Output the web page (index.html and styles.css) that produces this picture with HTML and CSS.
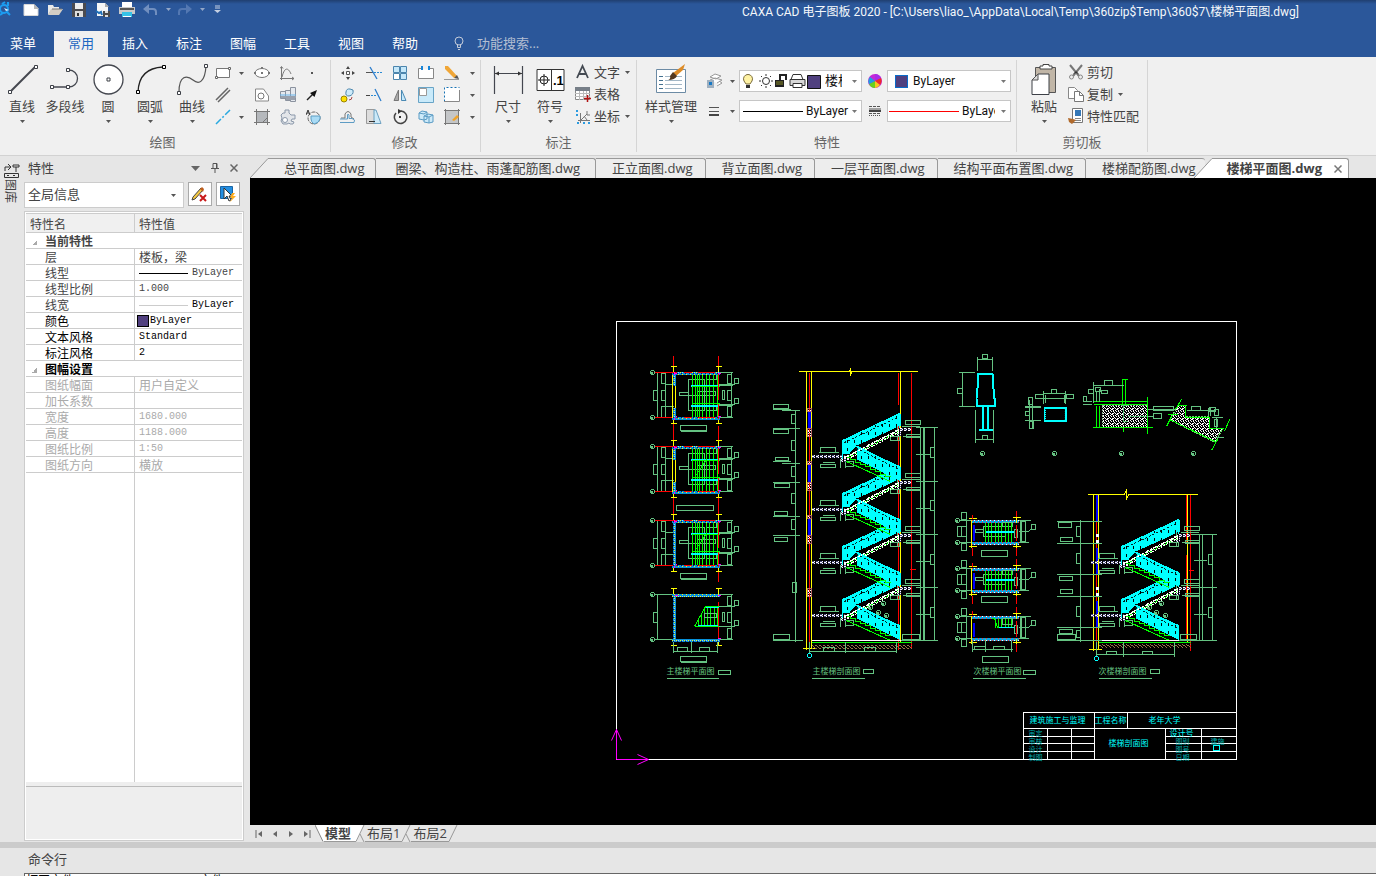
FILE: index.html
```html
<!DOCTYPE html>
<html lang="zh-CN">
<head>
<meta charset="utf-8">
<title>CAXA CAD 电子图板 2020</title>
<link rel="stylesheet" href="styles.css">
</head>
<body>
<svg class="defs" aria-hidden="true">
  <symbol id="caret" viewBox="0 0 5 3"><path d="M0 0h5L2.500 3z" fill="currentColor"/></symbol>
</svg>
<div class="app">
<header class="top">
  <div class="titlebar">
    <div class="quick">
      <button class="q logo" aria-label="应用"><svg width="16" height="18" viewBox="0 0 16 18"><g fill="none" stroke="#1c9cf0" stroke-width="2"><circle cx="4" cy="8" r="4"/><path d="M7 11l3 3M2 3l3-2M8 5V1M0 14l3-2"/></g><path d="M4 7l5 2-3 1z" fill="#d5ecff"/></svg></button>
      <button class="q" aria-label="新建"><svg width="16" height="18" viewBox="0 0 16 18"><path d="M1 3.500h10l4 4v7H1z" fill="#fff" stroke="#d8d8d8"/><path d="M11 3v5h5z" fill="#b7b7b7"/></svg></button>
      <button class="q" aria-label="打开"><svg width="16" height="18" viewBox="0 0 16 18"><path d="M1 14V4h5l1 2h5v2H5z" fill="#e9e9e9"/><path d="M4 8h12l-4 6H1z" fill="#d3cdc4"/><path d="M5 8h10" stroke="#777"/></svg></button>
      <button class="q" aria-label="保存"><svg width="14" height="18" viewBox="0 0 14 18"><path d="M0 2h14v14H0z" fill="#4b4b50"/><path d="M3 2h8v6H3z" fill="#eee"/><path d="M3 10h8v6H3z" fill="#ddd"/><path d="M5 12h2v3H5z" fill="#333"/></svg></button>
      <button class="q" aria-label="另存为"><svg width="16" height="18" viewBox="0 0 16 18"><path d="M2 2h8l3 3v10H2z" fill="#f6f6f6"/><path d="M10 2v4h4z" fill="#aaa"/><path d="M1 10l3 2 2-1 1 3" stroke="#2170b8" fill="none" stroke-width="2"/><path d="M8 10h7v6H8z" fill="#4a4a4d"/><path d="M10 10h3v2h-3zM10 14h3v2h-3z" fill="#ddd"/></svg></button>
      <button class="q" aria-label="打印"><svg width="16" height="18" viewBox="0 0 16 18"><path d="M3 1h10v6H3z" fill="#fff"/><path d="M0 6h16v7H0z" fill="#c9c9c9"/><path d="M1 7h14v2H1z" fill="#555"/><path d="M3 11h10v5H3z" fill="#35c2e8"/><path d="M4 15h8v1H4z" fill="#fff"/></svg></button>
      <button class="q" aria-label="撤销"><svg width="16" height="18" viewBox="0 0 16 18"><path d="M4 8h6q3 0 3 3v3" fill="none" stroke="#718fbf" stroke-width="2"/><path d="M6 3v10L0 8z" fill="#718fbf"/></svg></button>
      <button class="q drop" aria-label="撤销列表"><svg class="caret"><use href="#caret"/></svg></button>
      <button class="q" aria-label="重做"><svg width="16" height="18" viewBox="0 0 16 18"><path d="M10 8H5q-3 0-3 3v3" fill="none" stroke="#5478b2" stroke-width="2"/><path d="M9 3v10l6-5z" fill="#5478b2"/></svg></button>
      <button class="q drop" aria-label="重做列表"><svg class="caret"><use href="#caret"/></svg></button>
      <button class="q more" aria-label="自定义"><svg width="7" height="9" viewBox="0 0 7 9"><path d="M1 1h5M1 3h5" stroke="#c5d0e2"/><path d="M0 5h7L3.500 8z" fill="#c5d0e2"/></svg></button>
    </div>
    <div class="title">CAXA CAD 电子图板 2020 - [C:\Users\liao_\AppData\Local\Temp\360zip$Temp\360$7\楼梯平面图.dwg]</div>
  </div>
  <nav class="menu">
    <button class="mtab first">菜单</button><button class="mtab on">常用</button><button class="mtab">插入</button><button class="mtab">标注</button><button class="mtab">图幅</button><button class="mtab">工具</button><button class="mtab">视图</button><button class="mtab">帮助</button>
    <label class="search"><svg width="10" height="14" viewBox="0 0 10 14"><g fill="none" stroke="#c3cbd9"><circle cx="5" cy="5" r="4"/><path d="M3.500 8.500v3h3v-3M4 13.500h2"/></g></svg><input type="text" placeholder="功能搜索..." aria-label="功能搜索"></label>
  </nav>
</header>

<section class="ribbon">
  <div class="group g-draw">
    <div class="tools">
      <button class="big"><svg width="32" height="32" viewBox="0 0 32 32"><path d="M4 29L29 4" stroke="#44474f" stroke-width="2"/><g fill="#fff" stroke="#3d4047"><path d="M2.500 27.500h3v3h-3zM28.500 2.500h3v3h-3z"/></g></svg><span>直线</span><svg class="caret"><use href="#caret"/></svg></button>
      <button class="big"><svg width="32" height="32" viewBox="0 0 32 32"><path d="M3 24h17a8.500 8.500 0 0 0 0-17" fill="none" stroke="#44474f" stroke-width="1.300"/><g fill="#fff" stroke="#3d4047"><path d="M1.500 22.500h3v3h-3zM17.500 22.500h3v3h-3zM17.500 5.500h3v3h-3z"/></g></svg><span>多段线</span></button>
      <button class="big"><svg width="32" height="32" viewBox="0 0 32 32"><circle cx="16.500" cy="16.500" r="14.500" fill="#fff" stroke="#44474f" stroke-width="1.300"/><path d="M15 15h3v3h-3z" fill="#fff" stroke="#3d4047"/></svg><span>圆</span><svg class="caret"><use href="#caret"/></svg></button>
      <button class="big"><svg width="32" height="32" viewBox="0 0 32 32"><path d="M4 29Q5 5 29 4" fill="none" stroke="#222" stroke-width="1.300"/><g fill="#fff" stroke="#000"><path d="M2.500 27.500h3v3h-3zM28.500 2.500h3v3h-3z"/></g></svg><span>圆弧</span><svg class="caret"><use href="#caret"/></svg></button>
      <button class="big"><svg width="32" height="32" viewBox="0 0 32 32"><path d="M3 29C3 12 11 12 17 17s12 2 13-14" fill="none" stroke="#555" stroke-width="1.200"/><g fill="#fff" stroke="#3d4047"><path d="M1.500 28.500h3v3h-3zM28.500 1.500h3v3h-3z"/></g></svg><span>曲线</span><svg class="caret"><use href="#caret"/></svg></button>
      <div class="minis">
        <button class="mini wide" aria-label="矩形"><svg width="16" height="16" viewBox="0 0 16 16"><path d="M1.500 3.500h13v9h-13z" fill="#fff" stroke="#777"/><path d="M.5 11.500h2v2h-2zM13.500 2.500h2v2h-2z" fill="#fff" stroke="#666"/></svg><svg class="caret"><use href="#caret"/></svg></button>
        <button class="mini" aria-label="椭圆"><svg width="16" height="16" viewBox="0 0 16 16"><ellipse cx="8" cy="8" rx="7" ry="4.500" fill="#fff" stroke="#777"/><path d="M7 7h2v2H7zM0 7h2v2H0zM14 7h2v2h-2zM7 2h2v2H7z" fill="#777"/></svg></button>
        <button class="mini" aria-label="函数曲线"><svg width="16" height="16" viewBox="0 0 16 16"><path d="M1.500 2v13M0 13.500h14M0 3.500l1.500-2 1.500 2M12 12l2 1.500L12 15M2 12C5 0 9 4 11 9" fill="none" stroke="#777"/></svg></button>
        <button class="mini" aria-label="点"><svg width="16" height="16" viewBox="0 0 16 16"><path d="M5 7h2v2H5z" fill="#555"/></svg></button>
        <button class="mini wide" aria-label="平行线"><svg width="16" height="16" viewBox="0 0 16 16"><path d="M1 13L13 1M3 15L15 3" stroke="#666" stroke-width="1.500"/></svg></button>
        <button class="mini" aria-label="轮廓"><svg width="16" height="16" viewBox="0 0 16 16"><path d="M1.500 2h8l5 7v5h-13z" fill="#fff" stroke="#888"/><circle cx="7" cy="9" r="3" fill="none" stroke="#777"/></svg></button>
        <button class="mini" aria-label="孔轴"><svg width="16" height="16" viewBox="0 0 16 16"><path d="M.5 4.500h5v7h-5zM5.500 3.500h5v10h-5zM10.500.5h5v14h-5z" fill="#e4e8ee" stroke="#8b929e"/><path d="M0 8h16" stroke="#69b4ea"/><path d="M1 10h15M6 12h9" stroke="#9aa1ad" stroke-width="2"/></svg></button>
        <button class="mini" aria-label="箭头"><svg width="16" height="16" viewBox="0 0 16 16"><path d="M1 13l7-7" stroke="#222" stroke-width="1.500"/><path d="M11 3L8.500 10 4 6z" fill="#111"/></svg></button>
        <button class="mini wide" aria-label="中心线"><svg width="16" height="16" viewBox="0 0 16 16"><path d="M1 15L15 1" stroke="#29a9e0" stroke-width="1.500" stroke-dasharray="7 2 2 2"/></svg><svg class="caret"><use href="#caret"/></svg></button>
        <button class="mini" aria-label="剖面线"><svg width="16" height="16" viewBox="0 0 16 16"><path d="M2 2h12v12H2z" fill="#b5b8bc"/><path d="M0 2.500h16M0 13.500h16M2.500 0v16M13.500 0v16M9 13l4-4" stroke="#777"/></svg></button>
        <button class="mini" aria-label="齿轮"><svg width="16" height="16" viewBox="0 0 16 16"><path d="M5 4V1h4v3l2 2h4v4h-3l-1 2 3 1-1 2h-3l-1-1-2 1H3l-2-3 1-3-1-3 2-2z" fill="#e2e5e9" stroke="#8b98aa"/><circle cx="5" cy="11" r="2.500" fill="#fff" stroke="#8b98aa"/></svg></button>
        <button class="mini" aria-label="局部放大"><svg width="16" height="16" viewBox="0 0 16 16"><circle cx="8" cy="9" r="6" fill="none" stroke="#666" stroke-dasharray="4 1"/><path d="M5 7h9v3q-1 4-6 5-3-2-3-5z" fill="#a9dbf5" stroke="#5c9ec4"/><path d="M0 6l2-5 2 5M1 4h2" fill="none" stroke="#333"/></svg></button>
      </div>
    </div>
    <div class="gname">绘图</div>
  </div>

  <div class="group g-edit">
    <div class="tools">
      <div class="minis six">
        <button class="mini" aria-label="平移"><svg width="16" height="16" viewBox="0 0 16 16"><path d="M8 1l2 3H6zM8 15l2-3H6zM1 8l3-2v4zM15 8l-3-2v4z" fill="#444"/><path d="M6.500 6.500h3v3h-3z" fill="#fff" stroke="#555"/></svg></button>
        <button class="mini" aria-label="裁剪"><svg width="16" height="16" viewBox="0 0 16 16"><path d="M0 7.500h7" stroke="#555"/><path d="M8 7.500h8" stroke="#2c8bd4" stroke-dasharray="2 1"/><path d="M4 2l7 12" stroke="#2c7dcc" stroke-width="1.300"/></svg></button>
        <button class="mini" aria-label="阵列"><svg width="16" height="16" viewBox="0 0 16 16"><g fill="#c5e8fa" stroke="#4b85ad"><path d="M1.500 1.500h6v6h-6zM8.500 1.500h6v6h-6zM8.500 8.500h6v6h-6z"/><path d="M1.500 8.500h6v6h-6z" fill="#fff"/></g></svg></button>
        <button class="mini" aria-label="打断"><svg width="16" height="16" viewBox="0 0 16 16"><path d="M.5 3.500h15v10H.5z" fill="#fff" stroke="#888"/><path d="M5 3h6" stroke="#f0f0f0" stroke-width="3"/><path d="M4 1v4M11 1v4" stroke="#1885d8" stroke-width="2"/></svg></button>
        <button class="mini" aria-label="删除"><svg width="16" height="16" viewBox="0 0 16 16"><path d="M1 1l3 0 9 10-3 2L1 4z" fill="#f0a637"/><path d="M13 10l2 4-5-1z" fill="#555"/><path d="M0 14.500h15" stroke="#999"/></svg></button>
        <button class="mini arr" aria-label="更多删除"><svg class="caret"><use href="#caret"/></svg></button>
        <button class="mini" aria-label="复制对象"><svg width="16" height="16" viewBox="0 0 16 16"><circle cx="4" cy="12" r="3" fill="#ffe000" stroke="#998400"/><path d="M6 5a3.500 3.500 0 0 1 4-3l3 1q1 5-4 6-4 0-3-4z" fill="#cdeaf9" stroke="#4c87ae"/><path d="M9 13q3 0 3-3" fill="none" stroke="#a54444"/></svg></button>
        <button class="mini" aria-label="延伸"><svg width="16" height="16" viewBox="0 0 16 16"><path d="M0 8.500h4" stroke="#444"/><path d="M5 8.500h6" stroke="#2c8bd4" stroke-dasharray="2 1"/><path d="M9 2l6 12" stroke="#2c7dcc" stroke-width="1.300"/></svg></button>
        <button class="mini" aria-label="镜像"><svg width="16" height="16" viewBox="0 0 16 16"><path d="M6.500 3v10.500H2z" fill="#aaa" stroke="#777"/><path d="M9.500 3v10.500H14z" fill="#c5e8fa" stroke="#4a89b3"/></svg></button>
        <button class="mini" aria-label="缩放"><svg width="16" height="16" viewBox="0 0 16 16"><path d="M.5.5h15v15H.5z" fill="#c9eafa" stroke="#68a4c7"/><path d="M1.500 1.500h7v7h-7z" fill="#fff" stroke="#999"/></svg></button>
        <button class="mini" aria-label="拉伸"><svg width="16" height="16" viewBox="0 0 16 16"><path d="M.5.5h15v14H.5z" fill="#fff"/><path d="M.5 14.500V.5h15" fill="none" stroke="#1672b5" stroke-dasharray="2 2"/><path d="M0 14.500h15.500V3" fill="none" stroke="#888"/></svg></button>
        <button class="mini arr" aria-label="更多拉伸"><svg class="caret"><use href="#caret"/></svg></button>
        <button class="mini" aria-label="等距线"><svg width="16" height="16" viewBox="0 0 16 16"><path d="M1 9h4V5q3-5 6 0v3l3 2" fill="none" stroke="#777"/><path d="M0 13.500h14q2-3-2-4H9V6Q8 4 7.500 6v4H0" fill="none" stroke="#5e9cc4"/></svg></button>
        <button class="mini" aria-label="过渡"><svg width="16" height="16" viewBox="0 0 16 16"><path d="M.5.5h8v14h-8z" fill="#ddd" stroke="#999"/><path d="M8 1h2l5 13.500H8z" fill="#cdeaf9" stroke="#6da1c1"/><path d="M3 12.500h6" stroke="#333"/></svg></button>
        <button class="mini" aria-label="旋转"><svg width="16" height="16" viewBox="0 0 16 16"><path d="M9 2a6.200 6.200 0 1 1-5 2" fill="none" stroke="#444" stroke-width="1.500"/><path d="M6 0v5l4-3z" fill="#333"/><path d="M7 7h2v2H7z" fill="#333"/></svg></button>
        <button class="mini" aria-label="块"><svg width="16" height="16" viewBox="0 0 16 16"><g fill="#cdeaf9" stroke="#5a9bc4"><path d="M1 4l3-2 5 1v7l-3 1-5-1zM6 7l4-2 5 1v7l-4 1-5-1z"/><path d="M6 7l5 1 4-2M11 8v6M1 4l5 1 3-2" fill="none"/></g></svg></button>
        <button class="mini" aria-label="编辑剖面"><svg width="16" height="16" viewBox="0 0 16 16"><path d="M2 2h12v12H2z" fill="#c4c6c8"/><path d="M0 1.500h16M0 14.500h16M1.500 0v16M14.500 0v16" stroke="#777"/><path d="M8 11l5-5 2 2-5 4z" fill="#efa32b"/></svg></button>
        <button class="mini arr" aria-label="更多编辑"><svg class="caret"><use href="#caret"/></svg></button>
      </div>
    </div>
    <div class="gname">修改</div>
  </div>

  <div class="group g-note">
    <div class="tools">
      <button class="big"><svg width="32" height="32" viewBox="0 0 32 32"><path d="M2.500 3v28M30.500 3v28M3 10.500h27" stroke="#44474f" stroke-width="1.200"/><path d="M3 10.500l4-2v4zM30 10.500l-4-2v4z" fill="#333"/></svg><span>尺寸</span><svg class="caret"><use href="#caret"/></svg></button>
      <button class="big"><svg width="32" height="32" viewBox="0 0 32 32"><path d="M3 6.500h27v21H3zM17.500 6v22" fill="#fff" stroke="#333"/><circle cx="10" cy="17" r="4" fill="none" stroke="#222"/><path d="M4 17h12M10 11v12" stroke="#222"/><text x="19" y="22" font-family="Liberation Sans" font-size="13" font-weight="700">.1</text></svg><span>符号</span><svg class="caret"><use href="#caret"/></svg></button>
      <div class="rows">
        <button class="row"><svg width="16" height="16" viewBox="0 0 16 16"><path d="M2 14L7.500 2 13 14M4 10h7" fill="none" stroke="#444a52" stroke-width="1.800"/></svg>文字<svg class="caret"><use href="#caret"/></svg></button>
        <button class="row"><svg width="16" height="16" viewBox="0 0 16 16"><path d="M.5 1.500h14v12H.5z" fill="#fff" stroke="#888"/><path d="M0 1h15v4H0z" fill="#777f88"/><path d="M0 7.500h15M0 10.500h15M4.500 5v9M8.500 5v9M11.500 5v5" stroke="#bbb"/><path d="M12.500 9v7M9 12.500h7" stroke="#b31313" stroke-width="1.500"/></svg>表格</button>
        <button class="row"><svg width="16" height="16" viewBox="0 0 16 16"><path d="M5.500 5v10M3 12.500h12M6 12l6-6M12 3v4h3M9 8l3 4" fill="none" stroke="#777"/><path d="M1 3h2M1 7h2M2 15h2M8 15h2M13 15h2" stroke="#2b9be0" stroke-width="2"/></svg>坐标<svg class="caret"><use href="#caret"/></svg></button>
      </div>
    </div>
    <div class="gname">标注</div>
  </div>

  <div class="group g-prop">
    <div class="tools">
      <button class="big style"><svg width="32" height="32" viewBox="0 0 32 32"><path d="M1.500 6.500h29v23h-29z" fill="#fff" stroke="#6c8ba5"/><path d="M4 13.500h4M4 17.500h4M4 21.500h4M4 25.500h4" stroke="#44718f"/><path d="M10 13.500h17M10 17.500h17M10 21.500h17M10 25.500h17" stroke="#a3b7c6"/><path d="M30 1l-2 6-7 6-3-3z" fill="#dd8b26"/><path d="M18 9l4 4q-2 4-9 4 3-1 2-4z" fill="#54381f"/></svg><span>样式管理</span><svg class="caret"><use href="#caret"/></svg></button>
      <div class="props">
        <button class="pick" aria-label="图层"><svg width="16" height="16" viewBox="0 0 16 16"><path d="M4 4l5-3 6 2-5 3zM4 7l5-2 7 2-5 3M11 13l5-3-3-2" fill="#fff" stroke="#999"/><path d="M1 7h7v8H1z" fill="#9fb0c0"/><path d="M3 9h3v3H3z" fill="#1779c5"/></svg><svg class="caret"><use href="#caret"/></svg></button>
        <div class="combo layer"><svg width="80" height="18" viewBox="0 0 80 18"><path d="M3 9a4.500 4.500 0 1 1 8 0L9 12H5z" fill="#fff3a5" stroke="#7a6b3b"/><path d="M5 13h4v3H5z" fill="#333"/><circle cx="25" cy="9" r="3.500" fill="#fff" stroke="#333"/><path d="M25 2v2M25 14v2M18 9h2M30 9h2M20 4l1 1M29 13l1 1M30 4l-1 1M20 14l1-1" stroke="#333"/><path d="M34 8h9v7h-9z" fill="#222"/><path d="M39 8V3h6v5" fill="none" stroke="#222" stroke-width="2"/><path d="M35 10h7M35 12h7" stroke="#8b8b28"/><path d="M52 2.500h8l2 5H50z" fill="#fff" stroke="#333"/><path d="M49 7.500h15v6H49z" fill="#d8d8d8" stroke="#333"/><path d="M52 11.500h9v4h-9z" fill="#fff" stroke="#333"/><path d="M66.500 3.500h13v13h-13z" fill="#50407f" stroke="#111"/></svg><select aria-label="当前图层"><option>楼板，梁</option></select><svg class="caret"><use href="#caret"/></svg></div>
        <button class="pick one" aria-label="颜色"><svg width="14" height="14" viewBox="0 0 14 14"><circle cx="7" cy="7" r="7" fill="#c528d7"/><path d="M7 7V0a7 7 0 0 1 6 4z" fill="#a92be8"/><path d="M7 7l6-3a7 7 0 0 1-1 7z" fill="#f02a2a"/><path d="M7 7l5 4a7 7 0 0 1-5 3z" fill="#f7c91b"/><path d="M7 7v7a7 7 0 0 1-6-4z" fill="#68d21d"/><path d="M7 7l-6 3a7 7 0 0 1 1-7z" fill="#1c9fe3"/></svg></button>
        <div class="combo"><i class="sw"></i><select aria-label="当前颜色"><option>ByLayer</option></select><svg class="caret"><use href="#caret"/></svg></div>
        <button class="pick" aria-label="线宽"><svg width="16" height="16" viewBox="0 0 16 16"><path d="M3 4.500h10M3 8.500h10" stroke="#555"/><path d="M3 12h10" stroke="#444" stroke-width="2"/></svg><svg class="caret"><use href="#caret"/></svg></button>
        <div class="combo"><i class="ln black"></i><select aria-label="当前线宽"><option>ByLayer</option></select><svg class="caret"><use href="#caret"/></svg></div>
        <button class="pick one" aria-label="线型"><svg width="12" height="12" viewBox="0 0 12 12"><path d="M0 1.500h12M0 8.500h12" stroke="#555" stroke-dasharray="3 1"/><path d="M0 4h12" stroke="#555"/><path d="M0 6h12" stroke="#444" stroke-width="2"/><path d="M0 10.500h12" stroke="#555" stroke-dasharray="1 1"/></svg></button>
        <div class="combo line"><i class="ln red"></i><select aria-label="当前线型"><option>ByLayer</option></select><svg class="caret"><use href="#caret"/></svg></div>
      </div>
    </div>
    <div class="gname">特性</div>
  </div>

  <div class="group g-clip">
    <div class="tools">
      <button class="big"><svg width="32" height="32" viewBox="0 0 32 32"><path d="M7.500 4.500h20v25h-20z" fill="#c1b6a7" stroke="#555"/><path d="M12 6V3h3V1.500h6V3h3v3z" fill="#fff" stroke="#444"/><path d="M4 17l6-6h11v20.500H4z" fill="#fff" stroke="#3d4047"/><path d="M4 17h6v-6z" fill="#ddd" stroke="#555"/></svg><span>粘贴</span><svg class="caret"><use href="#caret"/></svg></button>
      <div class="rows">
        <button class="row"><svg width="16" height="16" viewBox="0 0 16 16"><path d="M2 1l9 11M14 1L5 12" stroke="#777" stroke-width="2"/><path d="M8 7l3 3-3-1-3 1z" fill="#333"/><g fill="#eee" stroke="#888"><circle cx="3.500" cy="13" r="2"/><circle cx="12.500" cy="13" r="2"/></g></svg>剪切</button>
        <button class="row"><svg width="16" height="16" viewBox="0 0 16 16"><path d="M.5 1.500h6l3 3v8h-9z" fill="#fff" stroke="#888"/><path d="M6.500 5.500h5l4 4v6h-9z" fill="#fff" stroke="#777"/><path d="M11.500 5.500v4h4" fill="none" stroke="#777"/></svg>复制<svg class="caret"><use href="#caret"/></svg></button>
        <button class="row"><svg width="16" height="16" viewBox="0 0 16 16"><path d="M4.500.5h10v14h-10z" fill="#fff" stroke="#777"/><path d="M7 2h6v6H7z" fill="#3578b8"/><path d="M7 10.500h6M7 12.500h6" stroke="#888"/><path d="M0 10l5 1 3 1-4 4-3-2z" fill="#b16a2c"/></svg>特性匹配</button>
      </div>
    </div>
    <div class="gname">剪切板</div>
  </div>
</section>

<main class="work">
  <aside class="dock"><svg width="16" height="16" viewBox="0 0 16 16"><path d="M1 8V4h5M4 1l3 3-3 3M9 2h6v2H9zM12 4v5" fill="none" stroke="#333"/><path d="M.5 10.500h14v4H.5zM3 12.500h2M9 12.500h2" fill="none" stroke="#333"/></svg><span>图库</span></aside>
  <section class="left">
    <div class="phead"><span>特性</span><button aria-label="选项"><svg width="9" height="5"><path d="M0 0h9L4.500 5z" fill="#666"/></svg></button><button aria-label="固定"><svg width="8" height="10" viewBox="0 0 8 10"><path d="M2 .5h4v5H2zM5.500 1v4M0 5.500h8M4 6v4" fill="none" stroke="#555"/></svg></button><button aria-label="关闭"><svg width="8" height="8"><path d="M.5.5l7 7M7.500.5l-7 7" stroke="#666" stroke-width="1.500"/></svg></button></div>
    <div class="pbar">
      <div class="scope"><select aria-label="对象范围"><option>全局信息</option></select><svg class="caret"><use href="#caret"/></svg></div>
      <button aria-label="清除选择"><svg width="18" height="18" viewBox="0 0 18 18"><path d="M2 12L10 3l2 2-8 9-3 1z" fill="#f4c842" stroke="#444"/><path d="M9 4l3 3 1-3-2-2z" fill="#be5d1d"/><path d="M9 10l6 6M15 10l-6 6" stroke="#c81919" stroke-width="2"/></svg></button>
      <button aria-label="快速选择"><svg width="18" height="18" viewBox="0 0 18 18"><path d="M1.500 1.500h12v12h-12z" fill="#238fe2" stroke="#1c65a3"/><path d="M5 3v11l3-3 2 5 2-1-2-4h3z" fill="#fff" stroke="#333"/><path d="M13 8l-2 5h2l-2 4 6-6h-3l2-3z" fill="#ffad1f"/></svg></button>
    </div>
    <div class="grid">
      <table>
        <thead><tr><th>特性名</th><th>特性值</th></tr></thead>
        <tbody>
          <tr class="sec"><td colspan="2">当前特性</td></tr>
          <tr><td>层</td><td class="cjk">楼板，梁</td></tr>
          <tr><td>线型</td><td><span class="lv"><i></i>ByLayer</span></td></tr>
          <tr><td>线型比例</td><td>1.000</td></tr>
          <tr><td>线宽</td><td class="dark"><span class="lv thin"><i></i>ByLayer</span></td></tr>
          <tr class="dark"><td>颜色</td><td><span class="cv"><i></i>ByLayer</span></td></tr>
          <tr class="dark"><td>文本风格</td><td>Standard</td></tr>
          <tr class="dark"><td>标注风格</td><td>2</td></tr>
          <tr class="sec dark"><td colspan="2">图幅设置</td></tr>
          <tr class="dim"><td>图纸幅面</td><td class="cjk">用户自定义</td></tr>
          <tr class="dim"><td>加长系数</td><td></td></tr>
          <tr class="dim"><td>宽度</td><td>1680.000</td></tr>
          <tr class="dim"><td>高度</td><td>1188.000</td></tr>
          <tr class="dim"><td>图纸比例</td><td>1:50</td></tr>
          <tr class="dim"><td>图纸方向</td><td class="cjk">横放</td></tr>
        </tbody>
      </table>
      <div class="fill"></div>
      <div class="hint"></div>
    </div>
  </section>
  <section class="docs">
    <div class="dtabs">
      <svg class="lead" width="20" height="22" viewBox="0 0 20 22"><path d="M0 22L18 2.500h2V22z" fill="#ededed"/><path d="M0 22L18 2.500h2" fill="none" stroke="#999"/></svg>
      <button class="dt one">总平面图.dwg</button><button class="dt two">圈梁、构造柱、雨蓬配筋图.dwg</button><button class="dt">正立面图.dwg</button><button class="dt">背立面图.dwg</button><button class="dt">一层平面图.dwg</button><button class="dt">结构平面布置图.dwg</button><button class="dt last">楼梯配筋图.dwg</button>
      <svg class="slant" width="20" height="22" viewBox="0 0 20 22"><path d="M0 22L18 2.500h2V22z" fill="#fff"/><path d="M0 22L18 2.500h2" fill="none" stroke="#999"/></svg>
      <div class="dt on"><button>楼梯平面图.dwg</button><button aria-label="关闭文档"><svg width="8" height="8"><path d="M.5.5l7 7M7.500.5l-7 7" stroke="#777" stroke-width="1.500"/></svg></button></div>
    </div>
    <div class="canvas">
      <svg class="drawing" role="img" aria-label="楼梯平面图">
        <defs>
          <pattern id="wall" width="4" height="4" patternUnits="userSpaceOnUse" patternTransform="translate(-.5 -.5)"><path d="M0 0h4v4H0z" fill="#0790d8"/><path d="M0 0h1v1H0zM2 2h1v1H2z" fill="#ff0"/><path d="M2 0h1v1H2z" fill="#9ad4ff"/><path d="M1 1h1v1H1z" fill="#115"/></pattern>
          <pattern id="wallr" width="4" height="4" patternUnits="userSpaceOnUse" patternTransform="translate(-.5 -.5)"><path d="M0 0h4v4H0z" fill="#08a4e0"/><path d="M0 0h1v1H0zM2 2h1v1H2z" fill="#f33"/><path d="M2 0h1v1H2z" fill="#fff"/></pattern>
          <pattern id="slab" width="4" height="2" patternUnits="userSpaceOnUse" patternTransform="translate(-.5 -.5)"><path d="M0 0h2v1H0zM2 1h1v1H2z" fill="#fff"/><path d="M2 0h1v1H2zM0 1h2v1H0z" fill="#447"/></pattern>
          <pattern id="hatch" width="5" height="5" patternUnits="userSpaceOnUse" patternTransform="translate(-.5 -.5)"><path d="M0 0h1v1H0zM1 1h1v1H1zM3 0h1v2H3zM2 3h2v1H2zM4 2h1v1H4zM0 3h1v1H0zM1 4h2v1H1z" fill="#fff"/></pattern>
          <pattern id="soil" width="4" height="3" patternUnits="userSpaceOnUse" patternTransform="translate(-.5 -.5)"><path d="M0 0h1v1H0zM1 1h1v1H1zM2 2h1v1H2zM3 0h1v1H3z" fill="#967048"/></pattern>
          <pattern id="rail" width="7" height="8" patternUnits="userSpaceOnUse" patternTransform="translate(-.5 -.5)"><path d="M0 0h7v8H0z" fill="#0ff"/><path d="M0 0h1v3H0z" fill="#000"/></pattern>
          <g id="circ"><circle r="2"/><path d="M-1-1v3M0-1v3"/></g>
          <g id="flight">
            <g class="g"><path d="M820 447h15v5h-15zM820 464h15v3h-15zM845 461h8v5h-8zM840 458v9M845 458v9M818 452h20M822 462h12M890 436h9v4h-9zM905 420h15v4h-15zM906 434h14v3h-14zM902 436h18M897 426v14M901 426h18"/></g>
            <path d="M810 454h34v3h-34zM840 456h5v5h-5zM898 427h13v3h-13zM896 429h4v6h-4z" fill="url(#slab)" stroke="none"/>
            <path class="lime" d="M848 455h4v-2h5v-3h5v-2h5v-3h5v-2h5v-3h5v-2h5v-3h5v-2h5v-3"/>
            <path d="M844 457l54-28v3l-51 27z" fill="url(#hatch)" stroke="#fff" stroke-dasharray="2 1"/>
            <path d="M842 440l58-27v12l-19 9-25 11-7 8h-7z" fill="url(#rail)" stroke="none"/>
            <path d="M842 458v-18l57-27v14" stroke="#0ff"/>
            <path d="M844 442l55-26" stroke="#022" stroke-dasharray="2 2"/>
            <path class="lime" d="M846 457h4v2h5v3h5v2h5v2h5v3h5v2h5v3h5v2h7M846 461l44 20"/>
            <path d="M856 445l43 21v14l-43-21z" fill="url(#rail)" stroke="none"/>
            <path d="M853 445l46 21v14" stroke="#0ff"/>
            <path d="M856 448l43 21" stroke="#022" stroke-dasharray="2 2"/>
            <path d="M844 457l24-12" stroke="#fff" stroke-dasharray="2 1"/>
          </g>
          <g id="plandim">
            <g class="g"><use href="#circ" x="652" y="372"/><use href="#circ" x="652" y="417"/><path d="M654 372h19M654 417h19M657 372v45M653 390h4v10h-4zM718 372h14M718 417h14M731 372v45M727 374h4v9h-4zM727 390h4v10h-4zM727 406h4v10h-4zM722 390h2v9h-2zM734 378h4v5h-4zM734 398h4v5h-4zM718 384h16l3-2M718 404h16l3-2"/></g>
            <path d="M670 366h6M670 423h6M673 366v6M673 418v5M715 366h6M715 423h6M718 366v6M718 418v5" stroke="#ff0"/>
          </g>
          <g id="plan">
            <use href="#plandim"/>
            <path class="g" d="M665 373v44M661 373h4v10h-4zM661 390h4v10h-4zM661 406h4v11h-4zM665 384h8M665 406h8M688 379h16v31h-16zM679 392h9v3h-9zM697 391h18v4h-18zM706 374h10v5h-10zM706 406h10v4h-10zM682 395h22"/>
            <path d="M692 373v44M695 373v44M697 373v44M699 373v44M702 373v44M706 373v44M709 373v44M713 373v44M717 373v44" class="lime"/>
            <path d="M690 385h28M690 405h28" stroke="#0ff" stroke-width="2"/><path d="M691 386h28M691 403h28" class="lime"/>
            <path d="M718 384h14M718 385h14M718 404h14M718 405h14" class="g"/>
            <path d="M671 371h48v3h-48zM671 416h48v3h-48z" fill="url(#wall)" stroke="none"/>
            <path class="r" d="M654 372h22M683 372h8M697 372h17M654 417h22M683 417h8M697 417h17M718 372v27M718 403v15"/><path d="M717 373h3M673 373h3M717 416h3M673 416h3M674 371v3M674 416v3" stroke="#f0f"/>
          </g>
          <g id="plan2">
            <g class="g"><use href="#circ" x="957" y="520"/><use href="#circ" x="957" y="542"/><path d="M958 520h14M958 542h14M961 512h5v7h-5zM957 526h4v10h-4zM961 526h5v10h-5zM961 543h5v7h-5zM966 518v28M1016 520h14M1016 542h12M1020 520v22M1025 520v22M1021 521h4v20h-4zM1031 524h4v5h-4zM1018 531h10l3-3M1014 529h3v8h-3z"/></g>
            <path d="M971 519h47v3h-47zM971 541h47v3h-47z" fill="url(#wallr)" stroke="none"/><path d="M971 519v28M968 518h8M968 546h8M1012 517h8M1016 516v6M1016 542v6M1012 546h8" stroke="#ff0"/>
            <path class="r" d="M972 514v4M972 547v8M1016 510v6M1016 524v16M1016 547v8"/>
          </g>
          <g id="p2in"><path class="g" d="M975 529h8v3h-8zM983 526h22v10h-22zM1002 522h10v4h-10z"/><path class="lime" d="M985 522v19M988 522v19M991 522v19M995 522v19M998 522v19M1001 522v19M1005 522v19M1008 522v19M1011 522v19"/><path d="M985 531h28" stroke="#0ff" stroke-width="2"/><path d="M973 524v16" stroke="#00f" stroke-width="2"/></g>
        </defs>
        <g transform="translate(-249.500 -177.500)" fill="none" stroke-width="1" shape-rendering="crispEdges">
          <path d="M616 321h620v438H616z" stroke="#fff"/>
          <path d="M616 759v-30l-5 11M616 729l5 11M616 759h32l-11-5M648 759l-11 5" stroke="#f0f" shape-rendering="auto"/>

          <path class="r" d="M673 355v12M673 423v21M673 497v21M718 355v12M718 425v20M718 497v21M718 571v10M718 601v42"/>
          <use href="#plan"/><use href="#plan" y="74"/><use href="#plan" y="148"/>
          <use href="#plandim" y="222"/>
          <path d="M672 374v43M675 374v43M672 448v43M675 448v43" stroke="#ff0"/>
          <path d="M672 374h3v11h-3zM672 407h3v10h-3zM672 448h3v11h-3zM672 481h3v10h-3zM672 522h3v43h-3zM672 594h3v45h-3zM671 593h48v3h-48zM671 638h48v3h-48z" fill="url(#wall)" stroke="none"/>
          <path d="M717 595h3M717 638h3M674 595h3" stroke="#f0f"/>
          <path class="lime" d="M694 626h24M705 606h13M694 626l11-20M698 626v-7M701 626v-12M704 626v-19M707 626v-19M710 626v-19M714 626v-19M717 626v-19M694 477l12-18M694 551l12-18"/>
          <path d="M705 607h13M697 625h20" stroke="#0ff"/>
          <path class="g" d="M680 425h26v5h-26zM680 431h26M680 573h26v5h-26zM680 579h26M704 613h12v4h-12zM673 641v11M691 641v11M717 641v11M673 651h44M677 647h10v4h-10zM699 647h10v4h-10zM680 656h26v5h-26zM680 662h26M676 505h37v5h-37zM718 670h12v4h-12zM666 678h52"/>
          <text class="cap" x="666" y="673">主楼梯平面图</text>

          <path class="r" d="M809 372v273M898 372v32M898 413v236M911 372v276M909 569h6"/>
          <path d="M798 371h51l1-3v7l1-4h66M806 371v278M811 371v277M900 371v270M802 648h12" stroke="#ff0"/>
          <path d="M809 410v17M809 463v18M809 517v17" stroke="#00f" stroke-width="3"/>
          <path d="M807 428h4v8h-4zM807 482h4v8h-4zM807 535h4v8h-4zM807 588h4v8h-4zM807 408h4v3h-4zM807 461h4v3h-4zM807 515h4v3h-4z" fill="url(#hatch)" stroke="#b66"/>
          <use href="#flight" y="159"/><use href="#flight" y="106"/><use href="#flight" y="53"/><use href="#flight"/>
          <path d="M811 640h100" stroke="#fff"/><path d="M811 642h100" class="lime"/><path d="M811 644h100v4H811z" fill="url(#soil)" stroke="none"/>
          <path class="g" d="M795 410v231M781 410h18M773 404h15v4h-15zM772 409h18M773 429h15v4h-15zM772 428h27M775 457h13v3h-13zM772 461h18M781 463h18M774 483h15v4h-15zM772 482h27M774 511h13v4h-13zM772 516h27M774 537h13v4h-13zM772 535h27M773 634h16v5h-16zM772 640h30M791 414h4v9h-4zM791 440h4v10h-4zM791 466h4v10h-4zM791 493h4v10h-4zM791 519h4v10h-4zM792 582h4v10h-4z"/>
          <path class="g" d="M920 427v213M923 427v213M924 427v213M934 427v213M915 427h22M915 454h14M915 481h22M915 508h14M915 534h22M915 561h14M915 587h22M915 614h14M900 640h37M930 447h4v10h-4zM930 500h4v10h-4zM930 554h4v10h-4zM930 607h4v10h-4zM902 634h17v5h-17z"/>
          <path class="g" d="M809 641v11M845 641v11M896 641v11M809 651h87M823 647h11v4h-11zM864 647h11v4h-11zM863 669h10v4h-10zM811 678h53"/>
          <g class="g"><use href="#circ" x="870" y="607"/><use href="#circ" x="883" y="603"/><use href="#circ" x="878" y="612"/><use href="#circ" x="886" y="615"/></g>
          <circle cx="809" cy="655" r="2" stroke="#0ff"/><text class="cap" x="812" y="673">主楼梯剖面图</text>

          <path d="M978 373h14l1 15 1 10v7h-18v-7l1-10zM982 406v23M987 406v23M978 429h14" stroke="#0ff" stroke-width="2"/>
          <path class="g" d="M977 356v14M992 356v14M977 359h15M982 354h5v4h-5zM958 372h16M958 406h16M962 372v34M957 388h5v5h-5zM975 409v33M993 409v33M975 439h18M982 435h5v4h-5z"/>
          <path d="M1044 407h21v13h-21z" stroke="#0ff" stroke-width="2"/><path d="M1045 408v11M1064 408v11" stroke="#022" stroke-dasharray="1 1"/>
          <path class="g" d="M1024 406h16M1024 407h16M1024 420h16M1029 399v29M1032 399v29M1025 411h4v4h-4zM1028 397h4v7h-4zM1029 421h4v7h-4zM1035 394h8v4h-8zM1043 390v13M1045 394v8M1065 390v13M1064 394v8M1043 393h22M1043 398h22M1051 389h5v4h-5zM1066 394h7v4h-7z"/>
          <path d="M1102 405h45v22h-45z" fill="url(#hatch)" stroke="#9b9" stroke-dasharray="2 1"/>
          <path class="lime" d="M1093 401h54v3h-54M1122 379v24M1125 379v24M1121 379h6M1147 396v37M1096 405v22M1099 405v22M1092 427h60M1123 427v4"/>
          <path class="g" d="M1093 381v21M1096 391v10M1099 388v13M1092 385h31M1104 380h8v5h-8zM1088 389h5v4h-5zM1095 387h5v4h-5zM1101 390h6v3h-6zM1082 401h9M1082 404h9M1083 396h3v5h-3zM1123 405v16h4M1120 405h8M1147 409h28M1153 406h20v4h-20zM1127 416h25M1153 413h8v5h-8z"/>
          <path d="M1178 405h7v11h24v12h13l-7 14-46-23z" fill="url(#hatch)" stroke="#6d6" stroke-dasharray="2 1"/>
          <path class="lime" d="M1167 414h10M1177 405h9M1185 406v11M1185 417h24M1209 417v11M1209 428h14M1181 399l-6 10M1171 416l-5 10M1169 419l46 22M1229 419l-5 12M1217 439l-6 11"/>
          <path class="g" d="M1186 410h28M1191 406h9v4h-9zM1208 407v8M1210 407v8M1209 407h6v4h-6zM1214 409h4v6h-4zM1211 417h11M1216 417v11M1214 419h3v7h-3zM1214 437h9"/>
          <g class="g"><use href="#circ" x="982" y="453"/><use href="#circ" x="1054" y="453"/><use href="#circ" x="1121" y="453"/><use href="#circ" x="1193" y="453"/></g>

          <use href="#plan2"/><use href="#plan2" y="48"/><use href="#plan2" y="96"/>
          <use href="#p2in"/><use href="#p2in" y="48"/>
          <path class="lime" d="M991 618h3l3 9h16M995 618v9M998 618v9M1001 618v9M1005 618v9M1008 618v9M1011 618v9"/><path d="M973 622v14" stroke="#00f" stroke-width="2"/><path d="M998 627h15" stroke="#0ff"/>
          <path class="g" d="M981 550h26v6h-26zM981 596h26v6h-26zM1002 618h10v6h-10zM972 640v11M985 638v13M1011 640v11M972 649h40M974 646h11v3h-11zM993 646h11v3h-11zM982 656h26v6h-26zM1023 670h12v4h-12zM972 678h53"/>
          <text class="cap" x="973" y="673">次楼梯平面图</text>

          <path class="r" d="M1096 494v147M1186 494v48M1186 554v86M1190 494v156M1188 570h5"/>
          <path d="M1087 494h37l2-5v10l2-5h69M1093 494v156M1098 494v155M1187 494v147M1088 649h13" stroke="#ff0"/>
          <path d="M1096 494v26M1096 547v26M1096 600v26" stroke="#00f" stroke-width="2"/>
          <path d="M1095 535h3M1095 541h3M1095 588h3M1095 594h3" stroke="#fff" stroke-width="3"/>
          <use href="#flight" x="279" y="159"/><use href="#flight" x="279" y="106"/>
          <path d="M1098 640h92" stroke="#fff"/><path class="lime" d="M1098 642h92"/><path d="M1098 643h92v4h-92z" fill="url(#soil)" stroke="none"/>
          <path class="g" d="M1080 519v122M1056 521h45M1058 522h13v5h-13zM1060 537h12v4h-12zM1056 543h45M1056 574h45M1059 576h13v4h-13zM1060 589h12v4h-12zM1056 596h45M1056 627h45M1059 629h13v4h-13zM1057 634h18v5h-18zM1056 640h45M1076 526h4v10h-4zM1076 553h4v10h-4zM1076 606h4v10h-4zM1076 630h4v7h-4z"/>
          <path class="g" d="M1199 534v106M1202 534v106M1212 534v106M1190 534h26M1193 560h13M1190 587h26M1193 614h13M1178 640h38M1208 554h4v10h-4zM1208 607h4v10h-4zM1180 634h16v5h-16zM1096 641v15M1123 641v15M1174 641v15M1096 654h78M1106 651h10v3h-10zM1142 651h10v3h-10zM1150 669h9v4h-9zM1098 678h53"/>
          <g class="g"><use href="#circ" x="1149" y="607"/><use href="#circ" x="1161" y="603"/><use href="#circ" x="1156" y="612"/><use href="#circ" x="1165" y="615"/></g>
          <circle cx="1096" cy="658" r="2" stroke="#0ff"/><text class="cap" x="1098" y="673">次楼梯剖面图</text>

          <path d="M1023 759v-47h213M1023 728h213M1023 736h71M1023 743h71M1023 751h71M1165 736h71M1165 743h71M1165 751h71M1047 728v31M1071 728v31M1094 712v47M1127 712v16M1165 728v31M1201 728v31" stroke="#fff"/>
          <g class="tb"><text x="1029" y="722">建筑施工与监理</text><text x="1094" y="722">工程名称</text><text x="1148" y="722">老年大学</text><text x="1108" y="745">楼梯剖面图</text><text x="1169" y="735">设计号</text></g>
          <g class="td"><text x="1028" y="735">审定</text><text x="1028" y="743">审核</text><text x="1028" y="751">设计</text><text x="1028" y="759">制图</text><text x="1175" y="743">图别</text><text x="1175" y="751">图号</text><text x="1175" y="759">日期</text><text x="1210" y="743">建施</text></g>
          <path d="M1213 745h6v5h-6z" stroke="#0ff"/>
        </g>
      </svg>
    </div>
    <div class="ltabs">
      <button class="nav" aria-label="首个"><svg width="8" height="8"><path d="M1 0v8" stroke="#666"/><path d="M7 1v6L3 4z" fill="#666"/></svg></button>
      <button class="nav" aria-label="上一个"><svg width="8" height="8"><path d="M6 1v6L2 4z" fill="#666"/></svg></button>
      <button class="nav" aria-label="下一个"><svg width="8" height="8"><path d="M2 1v6l4-3z" fill="#666"/></svg></button>
      <button class="nav" aria-label="末个"><svg width="8" height="8"><path d="M1 1v6l4-3z" fill="#666"/><path d="M7 0v8" stroke="#666"/></svg></button>
      <svg class="edge" width="9" height="17"><path d="M0 0l8 16h1V0z" fill="#fff"/><path d="M0 0l8 16.500" stroke="#888"/></svg><button class="lt on">模型</button><svg class="edge" width="9" height="17"><path d="M0 0h8L0 17z" fill="#fff"/><path d="M0 16.500L8 0M4 9l4 8" fill="none" stroke="#999"/></svg><button class="lt">布局1</button><svg class="edge" width="9" height="17"><path d="M0 16.500L8 0M4 9l4 8" fill="none" stroke="#999"/></svg><button class="lt">布局2</button><svg class="edge" width="9" height="17"><path d="M0 16.500L8 0" stroke="#999"/></svg>
    </div>
  </section>
</main>
<footer class="cmd"><div class="cname">命令行</div><div class="log">打开文件 <span>AutoCAD 2004 Drawing</span> 文件</div></footer>
</div>
</body>
</html>
```

FILE: styles.css
```css
* { box-sizing: border-box; }
body {
  margin: 0;
  font: 13px/18px "Open Sans", "Noto Sans CJK SC", sans-serif;
  color: #444;
  background: #e6e6e6;
}
button, select, input {
  font: inherit;
  color: inherit;
  margin: 0;
  padding: 0;
  border: 0;
  background: none;
}
select { appearance: none; min-width: 0; }
.defs { position: absolute; width: 0; height: 0; }
.caret { width: 5px; height: 3px; flex: none; color: #555; }
.app { display: flex; flex-direction: column; height: 100vh; overflow: hidden; }

.top { background: linear-gradient(#203f70, #2b579a 4px); color: #fff; flex: none; }
.titlebar { display: flex; align-items: center; justify-content: space-between; height: 31px; padding: 0 77px 12px 0; }
.quick { display: flex; align-items: center; }
.q { display: flex; align-items: center; justify-content: center; width: 24px; height: 20px; }
.q.logo { width: 19px; justify-content: flex-start; }
.q.drop { width: 10px; }
.q.drop .caret { color: #93a7c8; }
.q.more { width: 20px; }
.title { font: 12px/18px Roboto, "Noto Sans CJK SC", sans-serif; padding-top: 4px; color: #f4f7fb; white-space: nowrap; }
.menu { display: flex; height: 26px; }
.mtab { width: 54px; padding-bottom: 2px; color: #fff; }
.mtab.first { width: 46px; margin-right: 8px; }
.mtab.on { background: #f0f0f0; color: #1a66c2; }
.search { display: flex; align-items: center; gap: 13px; margin-left: 22px; padding-bottom: 2px; }
.search input { width: 120px; }
.search input::placeholder { color: #b4bfd2; opacity: 1; }

.ribbon { display: flex; flex: none; background: #f0f0f0; border-bottom: 1px solid #d2d2d2; padding: 3px 0; }
.group { display: flex; flex-direction: column; border-right: 1px solid #d5d5d5; height: 92px; }
.tools { display: flex; height: 72px; padding-top: 2px; }
.gname { text-align: center; color: #666; line-height: 20px; padding-right: 6px; }
.g-draw { width: 331px; padding-left: 1px; }
.g-edit { width: 150px; padding-left: 4px; }
.g-note { width: 156px; padding-left: 6px; }
.g-prop { width: 380px; padding-left: 7px; }
.g-clip { width: 131px; padding-left: 6px; }
.big { display: flex; flex-direction: column; align-items: center; width: 42px; height: 70px; padding-top: 1px; white-space: nowrap; }
.big > svg:first-child { margin-bottom: 2px; }
.big .caret { margin-top: 5px; }
.g-draw .big:nth-child(2) { width: 44px; }
.big.style { width: 54px; }
.minis { display: grid; grid-template-columns: 34px repeat(3, 26px); grid-auto-rows: 22px; margin-left: 2px; }
.minis.six { grid-template-columns: repeat(5, 26px) 14px; margin-left: 0; }
.mini { display: flex; align-items: center; justify-content: center; }
.mini.wide { justify-content: flex-start; gap: 8px; }
.rows { display: grid; grid-auto-rows: 22px; margin-left: 4px; }
.g-clip .rows { margin-left: 3px; }
.row { display: flex; align-items: center; gap: 3px; padding-bottom: 2px; white-space: nowrap; }
.row .caret { margin-left: 2px; }
.props { display: grid; grid-template-columns: 41px 123px 25px 124px; grid-template-rows: 22px 22px; row-gap: 8px; padding-top: 8px; }
.pick { display: flex; align-items: center; gap: 8px; padding-left: 8px; }
.pick.one { padding: 0; justify-content: center; }
.combo { display: flex; align-items: center; background: #fff; border: 1px solid #c6c6c6; padding: 0 4px 0 3px; color: #111; font: 12px/18px Roboto, "Noto Sans CJK SC", sans-serif; overflow: hidden; }
.combo select { flex: 1; overflow: hidden; text-overflow: clip; }
.combo .caret { color: #777; }
.combo.layer { padding-left: 1px; }
.combo.layer svg:first-child { flex: none; }
.combo.layer select { padding-left: 4px; margin-right: 10px; font-size: 13px; }
.sw { width: 13px; height: 13px; background: #50407f; border: 1px solid #0b6bc9; margin: 0 5px 0 4px; }
.ln { width: 60px; height: 1px; margin-right: 3px; }
.ln.black { background: #000; }
.ln.red { background: #f00; width: 70px; }
.combo.line { padding-left: 1px; }
.combo.line select { margin-right: 6px; }

.work { display: flex; flex: 1; min-height: 0; border-bottom: 6px solid #cbcbcb; }
.dock { width: 24px; flex: none; padding: 7px 4px; font: 12px/14px "Noto Sans CJK SC", sans-serif; }
.dock svg { display: block; }
.dock span { writing-mode: vertical-rl; text-orientation: sideways; }
.left { display: flex; flex-direction: column; width: 220px; flex: none; padding-bottom: 1px; }
.phead { display: flex; align-items: center; height: 24px; padding: 0 6px 0 4px; gap: 11px; }
.phead span { flex: 1; padding-bottom: 1px; }
.phead button { display: flex; }
.pbar { display: flex; height: 28px; gap: 4px; padding-top: 2px; }
.scope { display: flex; align-items: center; width: 160px; height: 26px; background: #fff; border: 1px solid #ccc; padding: 0 7px 0 3px; }
.scope select { flex: 1; padding-bottom: 2px; }
.pbar button { width: 24px; height: 24px; background: #fff; border: 1px solid #aaa; display: flex; align-items: center; justify-content: center; }
.grid { display: flex; flex-direction: column; flex: 1; margin-top: 3px; padding: 1px; border: 1px solid #ccc; background: #fff; min-height: 0; }
table { width: 100%; border-collapse: separate; border-spacing: 0; table-layout: fixed; font: 12px/15px "Noto Sans CJK SC", sans-serif; }
th, td { height: 16px; padding: 0 0 0 4px; border-bottom: 1px solid #ccc; text-align: left; white-space: nowrap; overflow: hidden; }
th { height: 20px; font-weight: 400; line-height: 17px; background: #f0f0f0; border-top: 1px solid #ccc; }
th:first-child, td:first-child { width: 109px; border-right: 1px solid #ccc; }
td:first-child { padding-left: 19px; }
td + td { font: 10px/14px "Liberation Mono", "Noto Sans CJK SC", monospace; padding-top: 1px; }
td.cjk { font: 12px/15px "Noto Sans CJK SC", sans-serif; padding-top: 0; }
.sec td { font-weight: 700; }
.sec td:first-child { border-right: 0; }
.sec td::before { content: ""; display: inline-block; width: 5px; height: 5px; margin: 0 8px 1px -13px; background: linear-gradient(135deg, transparent 50%, #aaa 50%); }
.dark { color: #000; }
.dim { color: #aaa; }
.lv, .cv { display: flex; align-items: center; gap: 4px; }
.lv i { width: 49px; height: 1px; background: #000; }
.thin i { background: #ccc; }
.cv { gap: 1px; margin-left: -2px; }
.cv i { width: 12px; height: 12px; background: #50407f; border: 1px solid #000; }
.fill { flex: 1; border-bottom: 4px solid #eee; background: linear-gradient(#ccc, #ccc) 50% 0 / 1px 100% no-repeat #fff; }
.hint { height: 53px; background: #eee; border-top: 1px solid #bbb; }

.docs { display: flex; flex-direction: column; flex: 1; min-width: 0; margin-left: 6px; }
.dtabs { display: flex; height: 22px; flex: none; }
.dtabs svg { flex: none; }
.dt { height: 20px; margin-top: 2px; padding: 0 12px 0 16px; line-height: 17px; white-space: nowrap; background: #ededed; border: solid #999; border-width: 1px 1px 0 0; border-radius: 0 3px 0 0; }
.dt.one { padding: 0 10px 0 14px; }
.dt.two { padding: 0 15px 0 20px; }
.dt.last { padding-right: 9px; border-right: 0; }
.dtabs .slant { margin-left: -11px; }
.dt.on { display: flex; align-items: center; gap: 12px; padding: 0 6px 0 13px; background: #fff; font-weight: 700; }
.dt.on button { display: flex; }
.canvas { flex: 1; min-height: 0; background: #000; }
.drawing { display: block; width: 100%; height: 100%; }
.g { stroke: #64c281; }
.r { stroke: #f00; }
.lime { stroke: #0f0; }
.cap, .tb, .td { stroke: none; font-family: "Noto Sans CJK SC", sans-serif; }
.cap { font-size: 8px; fill: #64c281; }
.tb { font-size: 8px; fill: #0ff; }
.td { font-size: 7px; fill: #0aa; }
.ltabs { display: flex; height: 17px; flex: none; }
.nav { display: flex; align-items: center; justify-content: center; width: 16px; padding-left: 1px; }
.ltabs .edge { flex: none; }
.ltabs .nav + .edge { margin-left: 1px; }
.lt { padding: 0 2px; line-height: 14px; border-bottom: 1px solid #999; }
.lt.on { background: #fff; font-weight: 700; padding: 0 5px 0 1px; }

.cmd { flex: none; height: 28px; padding-left: 24px; overflow: hidden; }
.cname { padding: 2px 4px 5px; }
.log { border-top: 1px solid #666; border-left: 1px solid #666; background: #fff; color: #000; padding-left: 1px; font: 12px/12px "Noto Sans CJK SC", sans-serif; white-space: pre; height: 16px; }
.log span { font: 10px/12px "Liberation Mono", monospace; }
```
